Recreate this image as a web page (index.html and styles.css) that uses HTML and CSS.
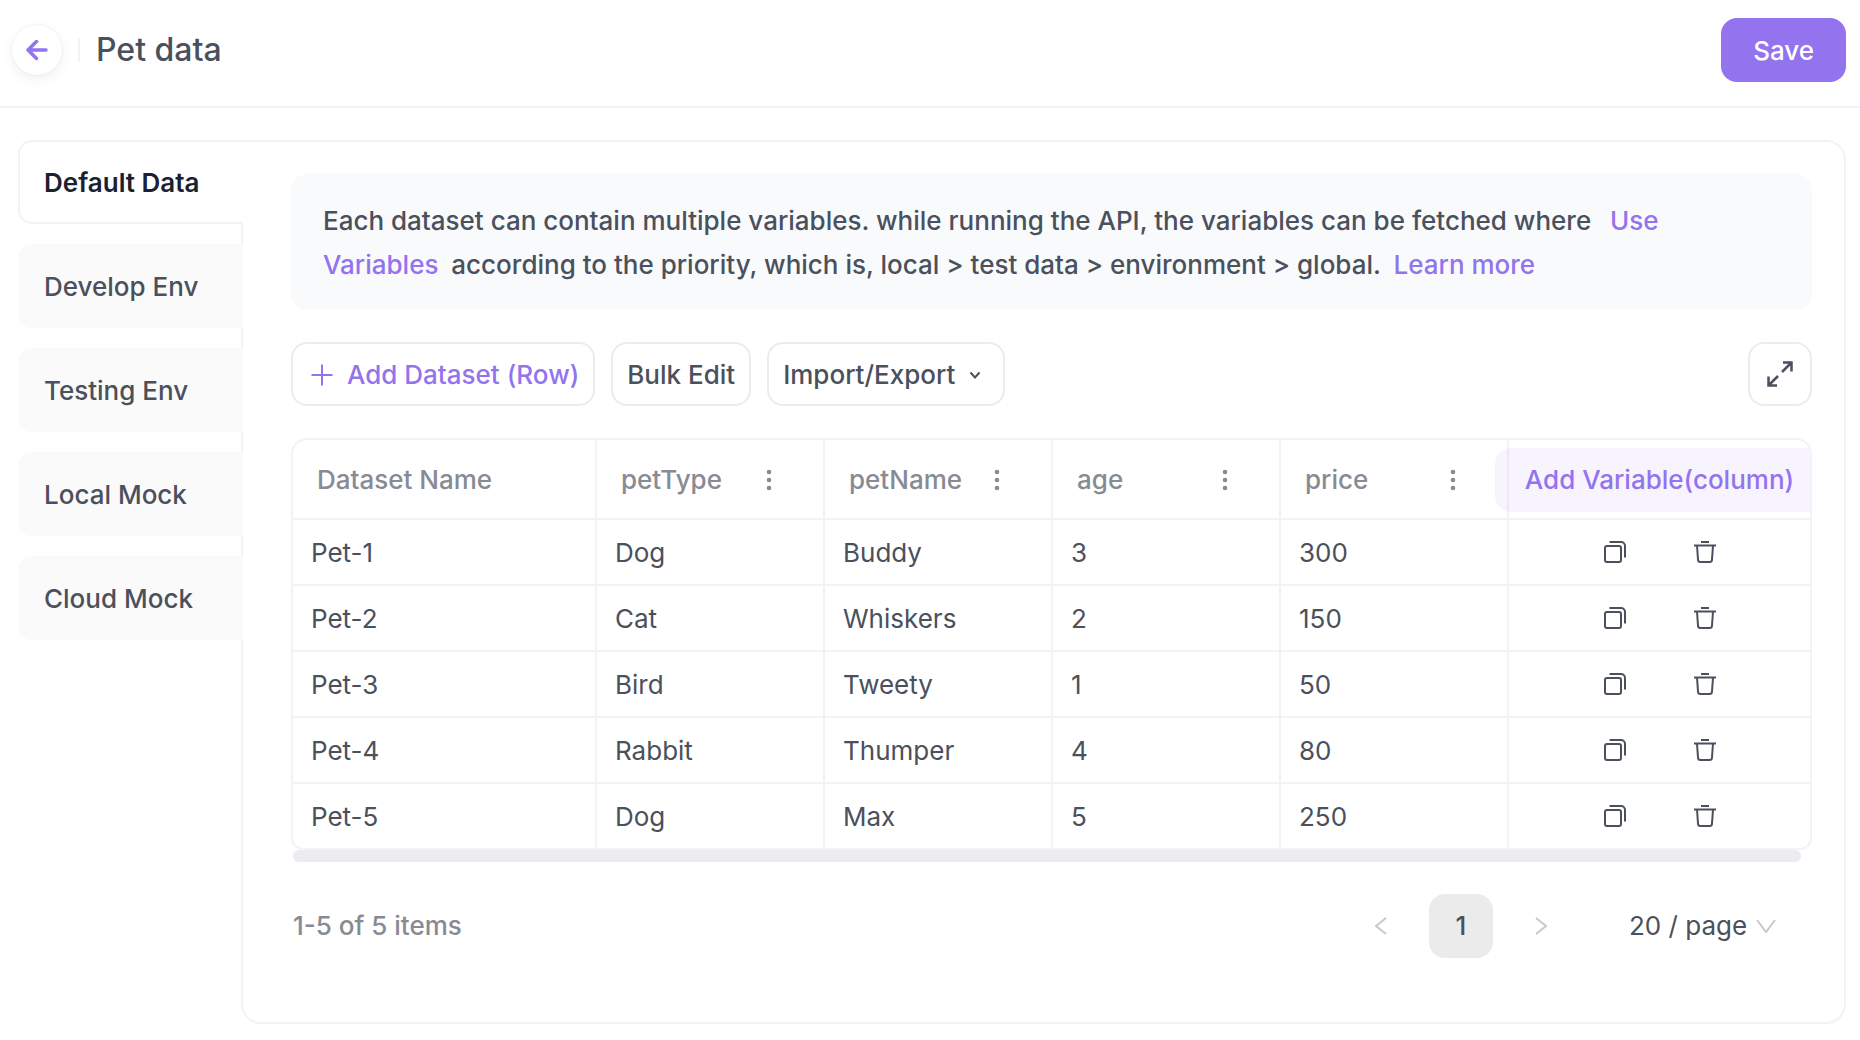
FILE: index.html
```html
<!DOCTYPE html>
<html lang="en">
<head>
    <meta charset="utf-8">
    <meta name="viewport" content="width=device-width, initial-scale=1">
    <title>Pet data</title>
    <link rel="stylesheet" href="styles.css">
</head>

<body>

<!-- shared icons -->
<svg class="sprite" aria-hidden="true">
    <symbol id="icon-more" viewBox="0 0 24 24">
        <circle cx="12" cy="4" r="2.3"/><circle cx="12" cy="12" r="2.3"/><circle cx="12" cy="20" r="2.3"/>
    </symbol>
    <symbol id="icon-copy" viewBox="0 0 24 24">
        <rect x="2" y="6" width="16" height="16" rx="2"/>
        <path d="M6.5 2H18a4 4 0 0 1 4 4v11.5"/>
    </symbol>
    <symbol id="icon-trash" viewBox="0 0 24 24">
        <path d="M8 2h8M1 5.500h22M4 5.500l1 14a2.500 2.500 0 0 0 2.500 2.500h9a2.500 2.500 0 0 0 2.500-2.500l1-14"/>
    </symbol>
</svg>

<header class="topbar">
    <button type="button" class="back" aria-label="Back">
        <svg width="22" height="22" viewBox="0 0 22 22"><path d="M20 11H2.500M10.500 2.500L2 11l8.500 8.500"/></svg>
    </button>
    <span class="divider"></span>
    <h1>Pet data</h1>
    <button type="button" class="save">Save</button>
</header>

<main class="layout">
    <nav class="tabs">
        <button type="button" class="tab active">Default Data</button>
        <button type="button" class="tab">Develop Env</button>
        <button type="button" class="tab">Testing Env</button>
        <button type="button" class="tab">Local Mock</button>
        <button type="button" class="tab">Cloud Mock</button>
    </nav>

    <section class="panel">
        <p class="info">Each dataset can contain multiple variables. while running the API, the variables can be fetched where <a href="#" class="use">Use Variables</a> according to the priority, which is, local &gt; test data &gt; environment &gt; global. <a href="#" class="learn">Learn more</a></p>

        <div class="toolbar">
            <button type="button" class="btn add">
                <svg width="22" height="22" viewBox="0 0 22 22"><path d="M11 0.500v21M0.500 11h21"/></svg>
                Add Dataset (Row)
            </button>
            <button type="button" class="btn">Bulk Edit</button>
            <button type="button" class="btn menu">
                Import/Export
                <svg width="12" height="12" viewBox="0 0 12 12"><path d="M1.500 3.500L6 8.500l4.500-5"/></svg>
            </button>
            <button type="button" class="btn expand" aria-label="Full screen">
                <svg width="28" height="28" viewBox="0 0 28 28"><path d="M17 2.500h8.500v9M25.500 2.500L16 12M11 25.500H2.500v-9M2.500 25.500L12 16"/></svg>
            </button>
        </div>

        <div class="table-wrap">
            <table>
                <colgroup>
                    <col class="col-name"><col><col><col><col><col class="col-actions">
                </colgroup>
                <thead>
                    <tr>
                        <th>Dataset Name</th>
                        <th><div class="head">petType <button type="button" class="more" aria-label="petType options"><svg><use href="#icon-more"/></svg></button></div></th>
                        <th><div class="head">petName <button type="button" class="more" aria-label="petName options"><svg><use href="#icon-more"/></svg></button></div></th>
                        <th><div class="head">age <button type="button" class="more" aria-label="age options"><svg><use href="#icon-more"/></svg></button></div></th>
                        <th><div class="head">price <button type="button" class="more" aria-label="price options"><svg><use href="#icon-more"/></svg></button></div></th>
                        <th class="add-cell"><button type="button" class="add-column">Add Variable(column)</button></th>
                    </tr>
                </thead>
                <tbody>
                    <tr>
                        <td>Pet-1</td><td>Dog</td><td>Buddy</td><td>3</td><td>300</td>
                        <td><div class="actions"><button type="button" aria-label="Copy"><svg><use href="#icon-copy"/></svg></button><button type="button" aria-label="Delete"><svg><use href="#icon-trash"/></svg></button></div></td>
                    </tr>
                    <tr>
                        <td>Pet-2</td><td>Cat</td><td>Whiskers</td><td>2</td><td>150</td>
                        <td><div class="actions"><button type="button" aria-label="Copy"><svg><use href="#icon-copy"/></svg></button><button type="button" aria-label="Delete"><svg><use href="#icon-trash"/></svg></button></div></td>
                    </tr>
                    <tr>
                        <td>Pet-3</td><td>Bird</td><td>Tweety</td><td>1</td><td>50</td>
                        <td><div class="actions"><button type="button" aria-label="Copy"><svg><use href="#icon-copy"/></svg></button><button type="button" aria-label="Delete"><svg><use href="#icon-trash"/></svg></button></div></td>
                    </tr>
                    <tr>
                        <td>Pet-4</td><td>Rabbit</td><td>Thumper</td><td>4</td><td>80</td>
                        <td><div class="actions"><button type="button" aria-label="Copy"><svg><use href="#icon-copy"/></svg></button><button type="button" aria-label="Delete"><svg><use href="#icon-trash"/></svg></button></div></td>
                    </tr>
                    <tr>
                        <td>Pet-5</td><td>Dog</td><td>Max</td><td>5</td><td>250</td>
                        <td><div class="actions"><button type="button" aria-label="Copy"><svg><use href="#icon-copy"/></svg></button><button type="button" aria-label="Delete"><svg><use href="#icon-trash"/></svg></button></div></td>
                    </tr>
                </tbody>
            </table>
        </div>
        <div class="scrollbar"></div>

        <footer class="pager">
            <span class="total">1-5 of 5 items</span>
            <button type="button" class="step" aria-label="Previous page">
                <svg width="12" height="18" viewBox="0 0 12 18"><path d="M11 1L1 9l10 8"/></svg>
            </button>
            <button type="button" class="page">1</button>
            <button type="button" class="step" aria-label="Next page">
                <svg width="12" height="18" viewBox="0 0 12 18"><path d="M1 1l10 8-10 8"/></svg>
            </button>
            <div class="size">
                <select aria-label="Items per page">
                    <option>20 / page</option>
                </select>
                <svg width="20" height="14" viewBox="0 0 20 14"><path d="M1 1l9 12 9-12"/></svg>
            </div>
        </footer>
    </section>
</main>

</body>
</html>
```

FILE: styles.css
```css
* { box-sizing: border-box; }

body {
    margin: 0;
    font-family: Inter, "Liberation Sans", sans-serif;
    font-size: 26px;
    line-height: 32px;
    color: #4a505c;
    background: #fff;
}

button, select {
    font: inherit;
    color: inherit;
    background: none;
    border: 0;
    padding: 0;
    cursor: pointer;
}

svg {
    display: block;
    flex: none;
    fill: none;
    stroke: currentColor;
    stroke-width: 2;
}

a {
    color: #9373ee;
    text-decoration: none;
}

.sprite {
    position: absolute;
    width: 0;
    height: 0;
}

/* top bar */
.topbar {
    display: flex;
    align-items: center;
    height: 108px;
    padding: 0 14px 6px 12px;
    border-bottom: 2px solid #f2f2f7;
}

.back {
    display: flex;
    align-items: center;
    justify-content: center;
    width: 50px;
    height: 50px;
    border-radius: 50%;
    color: #9373ee;
    box-shadow: 0 4px 12px rgba(60, 60, 110, .08), 0 0 2px rgba(60, 60, 110, .1);
}

.back svg {
    stroke-width: 3.5;
    stroke-linecap: round;
    stroke-linejoin: round;
}

.divider {
    width: 2px;
    height: 24px;
    margin: 0 16px;
    background: #f2f2f7;
}

h1 {
    margin: 0;
    font-size: 32px;
    font-weight: 500;
}

.save {
    height: 64px;
    margin-left: auto;
    padding: 2px 32px 0;
    border-radius: 16px;
    font-weight: 500;
    color: #fff;
    background: #9373ee;
}

/* environment tabs on the left, joined to the panel */
.layout {
    display: flex;
    padding: 32px 14px 16px 18px;
}

.tabs {
    display: flex;
    flex-direction: column;
    gap: 20px;
    width: 225px;
    margin-right: -2px;
    z-index: 1;
}

.tab {
    height: 84px;
    padding: 2px 26px 0;
    border-radius: 14px 0 0 14px;
    font-weight: 500;
    text-align: left;
    background: #fafafa;
}

.tab.active {
    padding: 2px 24px 0;
    border: 2px solid #f2f2f7;
    border-right: 0;
    font-weight: 600;
    color: #1a2130;
    background: #fff;
}

.panel {
    flex: 1;
    min-width: 0;
    padding: 32px 32px 64px 48px;
    border: 2px solid #f2f2f7;
    border-radius: 0 20px 20px 20px;
}

.info {
    margin: 0 0 32px;
    padding: 25px 32px 23px;
    border-radius: 16px;
    line-height: 44px;
    font-weight: 500;
    background: #f9fafc;
}

.use { margin: 0 6px 0 12px; }
.learn { margin-left: 6px; }

/* buttons above the table */
.toolbar {
    display: flex;
    gap: 16px;
    margin-bottom: 32px;
}

.btn {
    display: flex;
    align-items: center;
    gap: 14px;
    height: 64px;
    padding: 2px 14px 0;
    border: 2px solid #ebebf0;
    border-radius: 16px;
    font-weight: 500;
}

.add {
    padding-left: 18px;
    color: #9373ee;
}

.menu { padding-right: 22px; }

.expand {
    justify-content: center;
    width: 64px;
    margin-left: auto;
    padding: 0;
}

.btn.expand svg { stroke-width: 2.5; }

/* dataset table */
.table-wrap {
    overflow: hidden;
    border: 2px solid #f2f2f7;
    border-radius: 16px 16px 12px 12px;
}

table {
    width: 100%;
    table-layout: fixed;
    border-collapse: separate;
    border-spacing: 0;
}

.col-name { width: 304px; }
.col-actions { width: 301px; }

th, td {
    border-right: 2px solid #f2f2f7;
    border-bottom: 2px solid #f2f2f7;
    text-align: left;
}

th {
    height: 80px;
    padding: 2px 24px 0;
    font-weight: 500;
    color: #888a94;
}

td {
    height: 66px;
    padding: 2px 18px 0;
}

th:last-child, td:last-child {
    padding: 0;
    border-right: 0;
}

tbody tr:last-child td { border-bottom: 0; height: 64px; }

.head {
    display: flex;
    align-items: center;
    justify-content: space-between;
    padding-right: 18px;
}

.more svg {
    width: 24px;
    height: 24px;
    fill: currentColor;
    stroke: none;
}

/* hangs over the neighbouring column */
.add-column {
    position: relative;
    display: block;
    width: calc(100% + 14px);
    height: 64px;
    margin: 2px 0 0 -14px;
    padding-left: 14px;
    border-radius: 16px 0 0 16px;
    white-space: nowrap;
    color: #9373ee;
    background: rgba(147, 115, 238, .08);
}

.actions {
    display: flex;
    justify-content: center;
    gap: 66px;
}

.actions svg {
    width: 24px;
    height: 24px;
}

.scrollbar {
    height: 12px;
    margin: 0 11px 0 2px;
    border-radius: 6px;
    background: #ebebf0;
}

/* pagination */
.pager {
    display: flex;
    align-items: center;
    margin-top: 32px;
    padding-right: 36px;
}

.total {
    margin-right: auto;
    padding-left: 2px;
    font-weight: 500;
    color: #888a94;
}

.step {
    display: flex;
    justify-content: center;
    width: 64px;
    color: #c8c8c8;
}

.page {
    width: 64px;
    height: 64px;
    margin: 0 16px;
    border-radius: 16px;
    font-weight: 500;
    background: #ebebeb;
}

.size {
    display: flex;
    align-items: center;
    gap: 8px;
    margin-left: 56px;
}

.size select { appearance: none; }
.size svg { color: #c8c8c8; }
```
